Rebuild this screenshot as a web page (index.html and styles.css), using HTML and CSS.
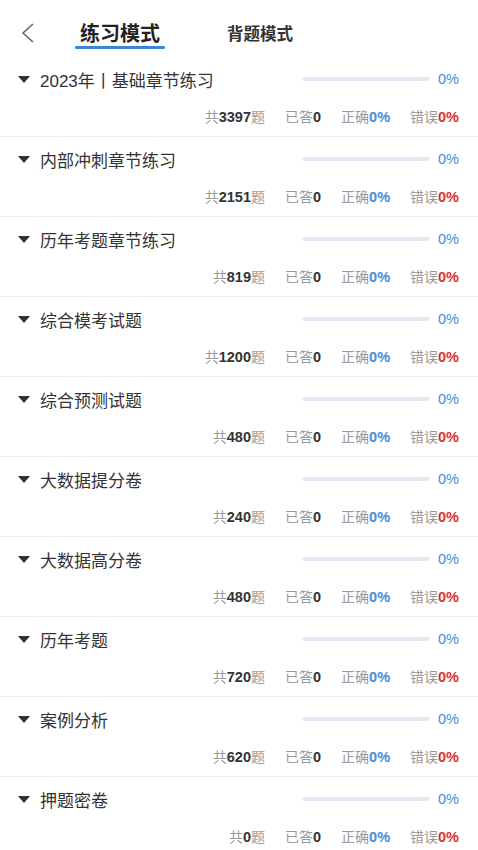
FILE: index.html
```html
<!DOCTYPE html>
<html lang="zh-CN">
<head>
    <meta charset="UTF-8">
    <meta name="viewport" content="width=device-width, initial-scale=1.0">
    <title>练习模式</title>
    <link rel="stylesheet" href="styles.css">
</head>
<body>
    <div class="header">
        <span class="back">
            <svg width="14" height="20" viewBox="0 0 14 20"><path d="M12 1 L2 10 L12 19" fill="none" stroke="#666" stroke-width="1.6"/></svg>
        </span>
        <div class="tab active">练习模式</div>
        <div class="tab">背题模式</div>
    </div>

    <div class="list" id="list"></div>

    <script>
        const items = [
            ['2023年丨基础章节练习', 3397],
            ['内部冲刺章节练习', 2151],
            ['历年考题章节练习', 819],
            ['综合模考试题', 1200],
            ['综合预测试题', 480],
            ['大数据提分卷', 240],
            ['大数据高分卷', 480],
            ['历年考题', 720],
            ['案例分析', 620],
            ['押题密卷', 0]
        ];
        const list = document.getElementById('list');
        items.forEach(function(item) {
            const row = document.createElement('div');
            row.className = 'row';
            row.innerHTML =
                '<div class="top">' +
                    '<span class="arrow"></span>' +
                    '<span class="name">' + item[0] + '</span>' +
                    '<span class="bar"></span>' +
                    '<span class="pct">0%</span>' +
                '</div>' +
                '<div class="stats">' +
                    '<span>共<b>' + item[1] + '</b>题</span>' +
                    '<span>已答<b>0</b></span>' +
                    '<span>正确<b class="blue">0%</b></span>' +
                    '<span>错误<b class="red">0%</b></span>' +
                '</div>';
            list.appendChild(row);
        });
    </script>
</body>
</html>
```

FILE: styles.css
```css
body {
    margin: 0;
    background: #fff;
    font-family: "Liberation Sans", "Noto Sans CJK SC", sans-serif;
    color: #333;
}

.header {
    height: 57px;
    display: flex;
    align-items: flex-start;
}

.back {
    margin: 23px 0 0 21px;
    width: 14px;
    height: 20px;
}

.tab {
    font-weight: bold;
    font-size: 16.5px;
    color: #333;
    margin-top: 24px;
    line-height: 20px;
}

.tab.active {
    font-size: 20px;
    margin: 23px 0 0 45px;
    line-height: 22px;
    position: relative;
    color: #222;
}

.tab.active::after {
    content: "";
    position: absolute;
    left: -5px;
    right: -5px;
    top: 23px;
    height: 3px;
    border-radius: 2px;
    background: #3a84dc;
}

.tab + .tab {
    margin-left: 67px;
}

.row {
    height: 79px;
    border-bottom: 1px solid #eeeeee;
    padding: 0 19px 0 18px;
}

.top {
    display: flex;
    align-items: center;
    height: 20px;
    padding-top: 12px;
}

.arrow {
    width: 0;
    height: 0;
    border-left: 6px solid transparent;
    border-right: 6px solid transparent;
    border-top: 7px solid #333;
    margin-right: 10px;
}

.name {
    font-size: 17px;
    flex: 1;
}

.bar {
    width: 128px;
    height: 4px;
    border-radius: 2px;
    background: #e2ebf7;
}

.pct {
    margin-left: 6px;
    font-size: 14.5px;
    color: #3d8ee0;
    width: 23px;
    text-align: right;
}

.stats {
    display: flex;
    justify-content: flex-end;
    gap: 20px;
    margin-top: 19px;
    font-size: 14px;
    line-height: 18px;
    color: #999;
}

.stats b {
    color: #333;
    font-size: 14.5px;
}

.stats b.blue {
    color: #3d8ee0;
}

.stats b.red {
    color: #e0302f;
}
```
